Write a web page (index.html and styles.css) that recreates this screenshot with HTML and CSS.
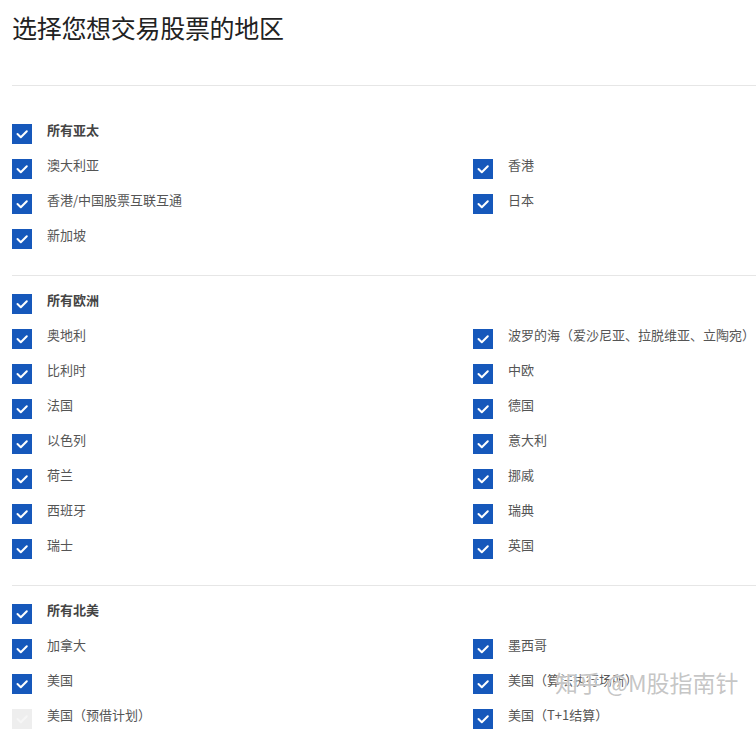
FILE: index.html
```html
<!DOCTYPE html>
<html lang="zh-CN">
<head>
    <meta charset="UTF-8">
    <meta name="viewport" content="width=device-width, initial-scale=1.0">
    <title>选择地区</title>
    <link rel="stylesheet" href="styles.css">
</head>
<body>
    <h1 class="title">选择您想交易股票的地区</h1>

    <div class="region first">
        <div class="option header"><span class="box"><svg viewBox="0 0 20 20"><polyline points="5.5,10 8.8,13.2 14.8,7.2"/></svg></span>所有亚太</div>
        <div class="option"><span class="box"><svg viewBox="0 0 20 20"><polyline points="5.5,10 8.8,13.2 14.8,7.2"/></svg></span>澳大利亚</div>
        <div class="option"><span class="box"><svg viewBox="0 0 20 20"><polyline points="5.5,10 8.8,13.2 14.8,7.2"/></svg></span>香港</div>
        <div class="option"><span class="box"><svg viewBox="0 0 20 20"><polyline points="5.5,10 8.8,13.2 14.8,7.2"/></svg></span>香港/中国股票互联互通</div>
        <div class="option"><span class="box"><svg viewBox="0 0 20 20"><polyline points="5.5,10 8.8,13.2 14.8,7.2"/></svg></span>日本</div>
        <div class="option"><span class="box"><svg viewBox="0 0 20 20"><polyline points="5.5,10 8.8,13.2 14.8,7.2"/></svg></span>新加坡</div>
    </div>

    <div class="region">
        <div class="option header"><span class="box"><svg viewBox="0 0 20 20"><polyline points="5.5,10 8.8,13.2 14.8,7.2"/></svg></span>所有欧洲</div>
        <div class="option"><span class="box"><svg viewBox="0 0 20 20"><polyline points="5.5,10 8.8,13.2 14.8,7.2"/></svg></span>奥地利</div>
        <div class="option"><span class="box"><svg viewBox="0 0 20 20"><polyline points="5.5,10 8.8,13.2 14.8,7.2"/></svg></span>波罗的海（爱沙尼亚、拉脱维亚、立陶宛）</div>
        <div class="option"><span class="box"><svg viewBox="0 0 20 20"><polyline points="5.5,10 8.8,13.2 14.8,7.2"/></svg></span>比利时</div>
        <div class="option"><span class="box"><svg viewBox="0 0 20 20"><polyline points="5.5,10 8.8,13.2 14.8,7.2"/></svg></span>中欧</div>
        <div class="option"><span class="box"><svg viewBox="0 0 20 20"><polyline points="5.5,10 8.8,13.2 14.8,7.2"/></svg></span>法国</div>
        <div class="option"><span class="box"><svg viewBox="0 0 20 20"><polyline points="5.5,10 8.8,13.2 14.8,7.2"/></svg></span>德国</div>
        <div class="option"><span class="box"><svg viewBox="0 0 20 20"><polyline points="5.5,10 8.8,13.2 14.8,7.2"/></svg></span>以色列</div>
        <div class="option"><span class="box"><svg viewBox="0 0 20 20"><polyline points="5.5,10 8.8,13.2 14.8,7.2"/></svg></span>意大利</div>
        <div class="option"><span class="box"><svg viewBox="0 0 20 20"><polyline points="5.5,10 8.8,13.2 14.8,7.2"/></svg></span>荷兰</div>
        <div class="option"><span class="box"><svg viewBox="0 0 20 20"><polyline points="5.5,10 8.8,13.2 14.8,7.2"/></svg></span>挪威</div>
        <div class="option"><span class="box"><svg viewBox="0 0 20 20"><polyline points="5.5,10 8.8,13.2 14.8,7.2"/></svg></span>西班牙</div>
        <div class="option"><span class="box"><svg viewBox="0 0 20 20"><polyline points="5.5,10 8.8,13.2 14.8,7.2"/></svg></span>瑞典</div>
        <div class="option"><span class="box"><svg viewBox="0 0 20 20"><polyline points="5.5,10 8.8,13.2 14.8,7.2"/></svg></span>瑞士</div>
        <div class="option"><span class="box"><svg viewBox="0 0 20 20"><polyline points="5.5,10 8.8,13.2 14.8,7.2"/></svg></span>英国</div>
    </div>

    <div class="region">
        <div class="option header"><span class="box"><svg viewBox="0 0 20 20"><polyline points="5.5,10 8.8,13.2 14.8,7.2"/></svg></span>所有北美</div>
        <div class="option"><span class="box"><svg viewBox="0 0 20 20"><polyline points="5.5,10 8.8,13.2 14.8,7.2"/></svg></span>加拿大</div>
        <div class="option"><span class="box"><svg viewBox="0 0 20 20"><polyline points="5.5,10 8.8,13.2 14.8,7.2"/></svg></span>墨西哥</div>
        <div class="option"><span class="box"><svg viewBox="0 0 20 20"><polyline points="5.5,10 8.8,13.2 14.8,7.2"/></svg></span>美国</div>
        <div class="option"><span class="box"><svg viewBox="0 0 20 20"><polyline points="5.5,10 8.8,13.2 14.8,7.2"/></svg></span>美国（算法执行场所）</div>
        <div class="option disabled"><span class="box"><svg viewBox="0 0 20 20"><polyline points="5.5,10 8.8,13.2 14.8,7.2"/></svg></span>美国（预借计划）</div>
        <div class="option"><span class="box"><svg viewBox="0 0 20 20"><polyline points="5.5,10 8.8,13.2 14.8,7.2"/></svg></span>美国（T+1结算）</div>
    </div>

    <div class="watermark">知乎 @M股指南针</div>
</body>
</html>
```

FILE: styles.css
```css
body {
    margin: 0;
    padding: 0 0 0 12px;
    font-family: "Microsoft YaHei", "Noto Sans CJK SC", sans-serif;
    color: #555;
    background: #fff;
    position: relative;
    overflow: hidden;
}

.title {
    margin: 0;
    padding-top: 11px;
    height: 74px;
    font-size: 25px;
    font-weight: normal;
    line-height: 32px;
    color: #222;
    letter-spacing: -0.3px;
}

.region {
    display: grid;
    grid-template-columns: 461px 1fr;
    border-top: 1px solid #e6e6e6;
    padding: 6px 0 23px;
}

.region.first {
    padding-top: 26px;
}

.option {
    display: flex;
    align-items: center;
    height: 35px;
    font-size: 13px;
    white-space: nowrap;
}

.option.header {
    grid-column: 1 / -1;
    font-weight: bold;
    color: #444;
}

.box {
    flex: none;
    width: 20px;
    height: 20px;
    margin: 8px 15px 0 0;
    background: #1658bb;
}

.box svg {
    display: block;
    width: 20px;
    height: 20px;
}

.box polyline {
    fill: none;
    stroke: #fff;
    stroke-width: 2;
    stroke-linecap: round;
    stroke-linejoin: round;
}

.disabled .box {
    background: #eeeeee;
}

.disabled .box polyline {
    stroke: #f6f6f6;
}

.watermark {
    position: absolute;
    left: 555px;
    top: 668px;
    font-size: 23px;
    line-height: 28px;
    color: rgba(165, 165, 165, 0.65);
    text-shadow: 0 0 2px #fff, 0 0 1px #fff;
    white-space: nowrap;
}
```
